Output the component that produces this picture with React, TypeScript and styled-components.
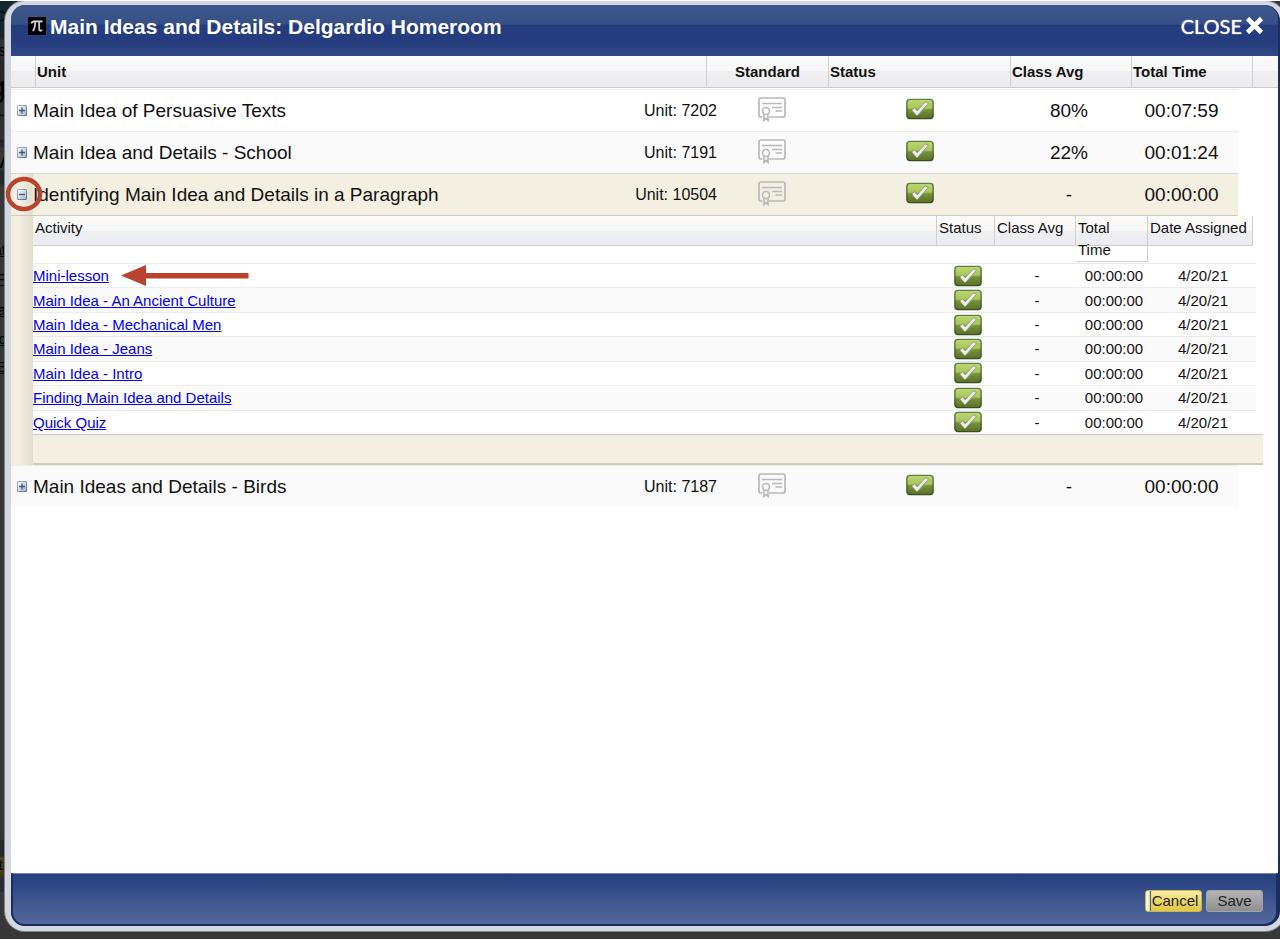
import React from "react";
import styled, { createGlobalStyle, css } from "styled-components";

const GlobalStyle = createGlobalStyle`
  * { box-sizing: border-box; }
  html, body { margin: 0; height: 100%; }
  #root { height: 100%; }
  body {
    background: #373737;
    font-family: "Liberation Sans", Arial, Helvetica, sans-serif;
    color: #111;
  }
`;

const Page = styled.div`
  position: relative;
  display: flex;
  min-height: 100vh;
  padding: 0 0 8px 5px;
  overflow: hidden;
  background: #373737;
  border-top: 1px solid #fff;
  border-bottom: 1px solid #fff;
`;

const Backdrop = styled.div`
  position: absolute;
  inset: 0 auto 0 0;
  width: 24px;
  background: linear-gradient(
    #10272f, #14262c 33px, #1d1d1d 35px, #333 41px, #2a2a2a 59px,
    #262626 63px, #2f2f2f 113px, #16182a 113px, #16182a 115px, #303030 116px,
    #303030 138px, #20242e 139px, #24272f 145px, #373737 148px, #373737 168px,
    #24272f 171px, #24272f 182px, #373737 186px,
    #373737 824px, #373737 838px, #25272b 840px, #25272b 855px, #4a4420 857px, #3d3812 874px,
    #2a2d31 877px, #2a2d31 890px, #373737 892px
  );
`;

const Glimpse = styled.span<{ $size: number; $underlined?: boolean }>`
  position: absolute;
  right: 18px;
  color: #000;
  font-size: ${(p) => p.$size}px;
  line-height: 20px;
  text-decoration: ${(p) => (p.$underlined ? "underline" : "none")};
`;

const Dialog = styled.section`
  position: relative;
  display: flex;
  flex-direction: column;
  flex: 1;
  margin-right: -5px;
  border: 5px solid #d3d8e0;
  border-top-width: 4px;
  border-left-width: 6px;
  border-radius: 20px;
  box-shadow: 0 0 0 1px #7f8389;
  background: #1b2d5e;
  padding-right: 2px;
`;

const TitleBar = styled.header`
  display: flex;
  align-items: center;
  height: 51px;
  padding: 0 14px 0 17px;
  border-radius: 14px 14px 0 0;
  color: #fff;
  background: linear-gradient(#3e568b, #365087 19px, #253d7e 20px, #253d7e 36px, #2f4984);
`;

const Title = styled.h1`
  flex: 1;
  margin: 0 0 8px 4px;
  font-size: 21px;
  line-height: 24px;
`;

const CloseButton = styled.button`
  display: flex;
  align-items: center;
  gap: 3px;
  margin: 0 0 10px;
  padding: 0;
  border: 0;
  background: none;
  color: #fff;
  font: 400 20px/24px Lato, sans-serif;
  text-shadow: 0 0 1px #fff;
`;

const Content = styled.main`
  flex: 1;
  background: #fff;
`;

const UnitTable = styled.table`
  display: block;
  border-collapse: collapse;
  thead, tbody { display: block; }
  th, td { padding: 0; text-align: left; }
`;

const HeadRow = styled.tr`
  display: grid;
  grid-template-columns: 24px 1fr 122px 182px 121px 121px 26px;
  height: 32px;
  background: linear-gradient(#fafafa, #f7f7f8 50%, #efeff1 50%, #ebecee);
  border-bottom: 1px solid #cbcbcd;
`;

const UnitHead = styled.thead`
  padding-bottom: 1px;
`;

const HeadCell = styled.th<{ $center?: boolean }>`
  border-left: 1px solid #cfcfd1;
  && {
    padding: 0 1px;
    text-align: ${(p) => (p.$center ? "center" : "left")};
  }
  font-size: 15px;
  line-height: 32px;
  &:first-child { border-left: 0; }
`;

const UnitRow = styled.tr<{ $tone: "plain" | "alt" | "open" }>`
  display: grid;
  grid-template-columns: 22px 1fr 110px 186px 112px 113px;
  align-items: center;
  height: 42px;
  margin-right: 40px;
  border-top: 1px solid #ececec;
  background: ${(p) => (p.$tone === "alt" ? "#fafafa" : "#fff")};
  ${(p) =>
    p.$tone === "open" &&
    css`
      height: 43px;
      border-top-color: #d4d4d6;
      border-bottom: 1px solid #cfcbb8;
      background: #f3efe1;
    `}
`;

const GutterCell = styled.td<{ $open?: boolean }>`
  display: flex;
  align-items: center;
  align-self: stretch;
  && { padding-left: 6px; }
  ${(p) => p.$open && css`background: linear-gradient(90deg, #f3efe1 40%, #e2dece);`}
`;

const Toggle = styled.button`
  position: relative;
  display: flex;
  padding: 0;
  border: 0;
  background: none;
`;

const NameCell = styled.td`
  display: flex;
  justify-content: space-between;
  align-items: center;
  font-size: 19px;
  line-height: 24px;
`;

const UnitCode = styled.span`
  font-size: 16px;
`;

const ValueCell = styled.td`
  && { text-align: center; }
  font-size: 19px;
  line-height: 24px;
`;

const IconCell = styled.td`
  display: flex;
  justify-content: center;
  && { padding-bottom: 3px; }
`;

const DetailRow = styled.tr`
  display: grid;
  grid-template-columns: 22px 1fr;
`;

const DetailCell = styled.td`
  margin-right: 15px;
`;

const ActivityTable = styled.table`
  display: block;
  font-size: 15px;
`;

const ActivityHead = styled.thead`
  && { display: block; }
  height: 47px;
`;

const ActivityHeadRow = styled.tr`
  display: grid;
  grid-template-columns: 1fr 58px 81px 72px 105px;
  align-items: start;
  height: 30px;
  margin-right: 10px;
  background: linear-gradient(#fafafa, #f7f7f8 50%, #eeeff1 50%, #ebecef);
  border-bottom: 1px solid #cbcbcd;
`;

const ActivityHeadCell = styled.th`
  && { padding: 1px 3px 0 2px; }
  min-height: 30px;
  border-right: 1px solid #cfcfd1;
  border-bottom: 1px solid #cfcfd1;
  font-weight: 400;
  line-height: 22px;
`;

const ActivityBody = styled.tbody`
  && { display: grid; }
  grid-auto-rows: 1fr;
  min-height: 171px;
  margin-right: 7px;
`;

const ActivityRow = styled.tr`
  display: grid;
  grid-template-columns: 1fr 56px 82px 72px 106px;
  align-items: center;
  border-top: 1px solid #ebebeb;
  &:nth-child(even) { background: #fafafa; }
`;

const LinkCell = styled.td`
  display: flex;
  align-items: center;
  gap: 12px;
  height: 22px;
`;

const NumberCell = styled.td`
  && { text-align: center; }
`;

const BadgeCell = styled.td`
  display: flex;
  justify-content: center;
  height: 22px;
`;

const ActivityLink = styled.a`
  color: #0000ee;
  text-decoration: underline;
`;

const DetailFooter = styled.div`
  height: 31px;
  border-top: 1px solid #c9c9cb;
  border-bottom: 2px solid #d0ccbc;
  background: #f3efe1;
`;

const Ring = styled.svg`
  position: absolute;
  left: -12px;
  top: -13px;
  pointer-events: none;
`;

const FooterBar = styled.footer`
  display: flex;
  justify-content: flex-end;
  align-items: flex-start;
  gap: 4px;
  height: 53px;
  padding: 16px 13px 0;
  border: 2px solid #1b2d5e;
  border-top: 1px solid #7d8494;
  border-radius: 0 0 14px 14px;
  background: linear-gradient(#253e7e, #53699c);
`;

const ActionButton = styled.button`
  min-width: 57px;
  height: 22px;
  padding: 0 3px;
  border: 1px solid #a5a5a8;
  border-radius: 3px;
  background: linear-gradient(#b5b5b5, #a2a2a2 50%, #8f8f8f);
  color: #222;
  font: 15px/20px "Liberation Sans", Arial, sans-serif;
`;

const CancelButton = styled(ActionButton)`
  padding: 0 2px 0 5px;
  border-color: #c9b65a;
  background:
    linear-gradient(90deg, #fbf6d8 2px, #e8d673 4px, #3a5fa8 4px, #3a5fa8 5px, transparent 5px),
    linear-gradient(#f8eda8, #ecd868 50%, #e0c748);
`;

const TitleIcon = styled.svg`
  margin-bottom: 10px;
`;

const PiIcon = () => (
  <TitleIcon width="18" height="18" viewBox="0 0 18 18">
    <path d="M0 0H18V18H0Z" fill="#000" />
    <path d="M3.6 6.4C4 4.4 5 4.4 6 4.4H14.5" fill="none" stroke="#e6e6e6" strokeWidth="1.8" />
    <path d="M7.2 4.5C7.2 9 6.8 12 4.8 14M11.2 4.5V12C11.2 14 13 14.4 14 12.6" fill="none" stroke="#cfcfcf" strokeWidth="1.8" />
  </TitleIcon>
);

const ToggleIcon = ({ open }: { open?: boolean }) => (
  <svg width="10" height="11" viewBox="0 0 10 11">
    <defs>
      <linearGradient id="toggle-fill" x1="0" y1="0" x2="1" y2="1">
        <stop offset="0" stopColor="#fff" />
        <stop offset="1" stopColor="#a3b2cc" />
      </linearGradient>
      <linearGradient id="toggle-edge" x1="0" y1="0" x2="1" y2="1">
        <stop offset="0" stopColor="#a9b6cd" />
        <stop offset="1" stopColor="#5a6d94" />
      </linearGradient>
    </defs>
    <rect x=".5" y=".5" width="9" height="10" rx=".5" fill="url(#toggle-fill)" stroke="url(#toggle-edge)" />
    <path d={open ? "M2 5.5H8" : "M2 5.5H8M5 2.5V8.5"} stroke="#4a5568" strokeWidth="1.3" />
  </svg>
);

const CertificateIcon = () => (
  <svg width="28" height="25" viewBox="0 0 28 25" fill="none" stroke="#b9b9b9">
    <path d="M4.5 20H3C1.8 20 1 19.2 1 18V3C1 1.8 1.8 1 3 1H25C26.2 1 27 1.8 27 3V18C27 19.2 26.2 20 25 20H11" strokeWidth="1.7" />
    <path d="M4 6.5H24M14 10.5H24M17.5 14H24" strokeWidth="1.5" />
    <circle cx="8" cy="14" r="3.5" strokeWidth="1.6" />
    <path d="M6 17V23.5L8 21.5L10 23.5V17" strokeWidth="1.6" />
  </svg>
);

const CheckBadge = () => (
  <svg width="28" height="22" viewBox="0 0 28 22">
    <defs>
      <linearGradient id="badge-fill" x1="0" y1="0" x2="0" y2="1">
        <stop offset="0" stopColor="#bdd673" />
        <stop offset=".45" stopColor="#abc65c" />
        <stop offset=".55" stopColor="#759139" />
        <stop offset="1" stopColor="#5a7029" />
      </linearGradient>
      <linearGradient id="badge-edge" x1="0" y1="0" x2="0" y2="1">
        <stop offset="0" stopColor="#5f8048" />
        <stop offset="1" stopColor="#3c4c1e" />
      </linearGradient>
    </defs>
    <rect x=".9" y="1.4" width="26.2" height="19.2" rx="3" fill="url(#badge-fill)" stroke="url(#badge-edge)" strokeWidth="1.4" />
    <path d="M5.6 12L8.6 9.8L11.2 12.8L19.4 3.8L22.4 5.4L11.6 17.4H10.4Z" fill="#ededed" stroke="#75855a" strokeWidth=".7" strokeLinejoin="round" />
  </svg>
);

const CrossIcon = () => (
  <svg width="19" height="19" viewBox="0 0 19 19">
    <path d="M2.5 2.5L16.5 16.5M16.5 2.5L2.5 16.5" stroke="#fff" strokeWidth="4.6" />
  </svg>
);

const glimpses = [
  { text: "C", top: 5, size: 15 },
  { text: "s", top: 40, size: 16 },
  { text: "g", top: 76, size: 30 },
  { text: "v", top: 150, size: 22 },
  { text: "at", top: 239, size: 15, underlined: true },
  { text: "F", top: 268, size: 15, underlined: true },
  { text: "a", top: 299, size: 15, underlined: true },
  { text: "c", top: 328, size: 15, underlined: true },
  { text: "E", top: 356, size: 15, underlined: true },
  { text: "ti", top: 854, size: 15 },
];

type Unit = { name: string; code: string; avg: string; time: string; tone: "plain" | "alt" | "open" };

const units: Unit[] = [
  { name: "Main Idea of Persuasive Texts", code: "7202", avg: "80%", time: "00:07:59", tone: "plain" },
  { name: "Main Idea and Details - School", code: "7191", avg: "22%", time: "00:01:24", tone: "alt" },
  { name: "Identifying Main Idea and Details in a Paragraph", code: "10504", avg: "-", time: "00:00:00", tone: "open" },
  { name: "Main Ideas and Details - Birds", code: "7187", avg: "-", time: "00:00:00", tone: "alt" },
];

const activities = [
  "Mini-lesson",
  "Main Idea - An Ancient Culture",
  "Main Idea - Mechanical Men",
  "Main Idea - Jeans",
  "Main Idea - Intro",
  "Finding Main Idea and Details",
  "Quick Quiz",
];

const Activities = () => (
  <DetailRow>
    <GutterCell $open />
    <DetailCell>
      <ActivityTable>
        <ActivityHead>
          <ActivityHeadRow>
            {["Activity", "Status", "Class Avg", "Total Time", "Date Assigned"].map((h) => (
              <ActivityHeadCell key={h} scope="col">{h}</ActivityHeadCell>
            ))}
          </ActivityHeadRow>
        </ActivityHead>
        <ActivityBody>
          {activities.map((name, i) => (
            <ActivityRow key={name}>
              <LinkCell>
                <ActivityLink href="#">{name}</ActivityLink>
                {i === 0 && (
                  <svg width="128" height="21" viewBox="0 0 128 21">
                    <path d="M0 10.5L25 0V8H127.5V13.5H25V21Z" fill="#b9432f" />
                  </svg>
                )}
              </LinkCell>
              <BadgeCell><CheckBadge /></BadgeCell>
              <NumberCell>-</NumberCell>
              <NumberCell>00:00:00</NumberCell>
              <NumberCell>4/20/21</NumberCell>
            </ActivityRow>
          ))}
        </ActivityBody>
      </ActivityTable>
      <DetailFooter />
    </DetailCell>
  </DetailRow>
);

const App = () => (
  <>
    <GlobalStyle />
    <Page>
      <Backdrop aria-hidden="true">
        {glimpses.map((g) => (
          <Glimpse key={g.top} $size={g.size} $underlined={g.underlined} style={{ top: g.top }}>
            {g.text}
          </Glimpse>
        ))}
      </Backdrop>
      <Dialog role="dialog" aria-labelledby="dialog-title">
        <TitleBar>
          <PiIcon />
          <Title id="dialog-title">Main Ideas and Details: Delgardio Homeroom</Title>
          <CloseButton type="button">CLOSE<CrossIcon /></CloseButton>
        </TitleBar>
        <Content>
          <UnitTable>
            <UnitHead>
              <HeadRow>
                <HeadCell />
                <HeadCell scope="col">Unit</HeadCell>
                <HeadCell scope="col" $center>Standard</HeadCell>
                <HeadCell scope="col">Status</HeadCell>
                <HeadCell scope="col">Class Avg</HeadCell>
                <HeadCell scope="col">Total Time</HeadCell>
                <HeadCell />
              </HeadRow>
            </UnitHead>
            <tbody>
              {units.map((u) => (
                <React.Fragment key={u.code}>
                  <UnitRow $tone={u.tone}>
                    <GutterCell $open={u.tone === "open"}>
                      <Toggle type="button" aria-label={`Toggle ${u.name}`} aria-expanded={u.tone === "open"}>
                        <ToggleIcon open={u.tone === "open"} />
                        {u.tone === "open" && (
                          <Ring width="38" height="36" viewBox="0 0 38 36">
                            <ellipse cx="19" cy="18" rx="16" ry="15" fill="none" stroke="#b9432f" strokeWidth="4.4" />
                          </Ring>
                        )}
                      </Toggle>
                    </GutterCell>
                    <NameCell>{u.name}<UnitCode>Unit: {u.code}</UnitCode></NameCell>
                    <IconCell><CertificateIcon /></IconCell>
                    <IconCell><CheckBadge /></IconCell>
                    <ValueCell>{u.avg}</ValueCell>
                    <ValueCell>{u.time}</ValueCell>
                  </UnitRow>
                  {u.tone === "open" && <Activities />}
                </React.Fragment>
              ))}
            </tbody>
          </UnitTable>
        </Content>
        <FooterBar>
          <CancelButton type="button">Cancel</CancelButton>
          <ActionButton type="button">Save</ActionButton>
        </FooterBar>
      </Dialog>
    </Page>
  </>
);

export default App;
